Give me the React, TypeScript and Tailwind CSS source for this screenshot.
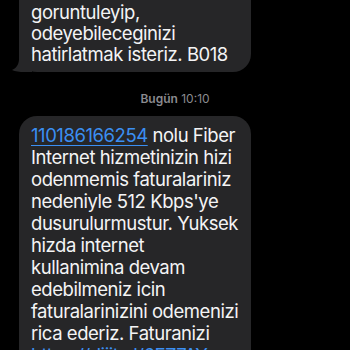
import React from 'react';

const Tail: React.FC = () => (
  <svg
    className="absolute -left-[7px] bottom-0"
    width="20"
    height="18"
    viewBox="0 0 20 18"
  >
    <path d="M20 0 L20 18 L12 18 C8 18 3 17.5 0 16 C4 14.5 6.5 11 7 6 L7 0 Z" fill="#262628" />
  </svg>
);

const App: React.FC = () => {
  const first = ['goruntuleyip,', 'odeyebileceginizi', 'hatirlatmak isteriz. B018'];
  const second = [
    'Internet hizmetinizin hizi',
    'odenmemis faturalariniz',
    "nedeniyle 512 Kbps'ye",
    'dusurulurmustur. Yuksek',
    'hizda internet',
    'kullanimina devam',
    'edebilmeniz icin',
    'faturalarinizini odemenizi',
    'rica ederiz. Faturanizi',
  ];

  return (
    <div
      className="w-[350px] h-[350px] overflow-hidden bg-black text-[#f4f4f5]"
      style={{ fontFamily: 'Inter, "Noto Sans", sans-serif' }}
    >
      {/* Previous message */}
      <div className="relative ml-[19px] w-[232px] -mt-[6px] rounded-b-[18px] bg-[#262628] px-[12px] pt-[8px] pb-[7px] text-[18.5px] leading-[21px] tracking-[-0.45px]">
        {first.map(line => (
          <div key={line} className="whitespace-nowrap">{line}</div>
        ))}
        <Tail />
      </div>

      {/* Timestamp */}
      <div className="mt-[19px] text-center text-[12px] leading-[16px] text-[#8a8a8f]">
        <span className="font-semibold">Bugün</span> <span>10:10</span>
      </div>

      {/* Current message */}
      <div className="ml-[19px] mt-[9px] w-[232px] rounded-[18px] bg-[#262628] px-[12px] pt-[8px] pb-[10px] text-[18.5px] leading-[22px] tracking-[-0.45px]">
        <div className="whitespace-nowrap">
          <span className="text-[#3b8ff2] underline underline-offset-[3px] decoration-1">110186166254</span> nolu Fiber
        </div>
        {second.map(line => (
          <div key={line} className="whitespace-nowrap">{line}</div>
        ))}
        <div className="whitespace-nowrap text-[#3b8ff2] underline">https://dijit.al/6EZ7AY</div>
      </div>
    </div>
  );
};

export default App;
